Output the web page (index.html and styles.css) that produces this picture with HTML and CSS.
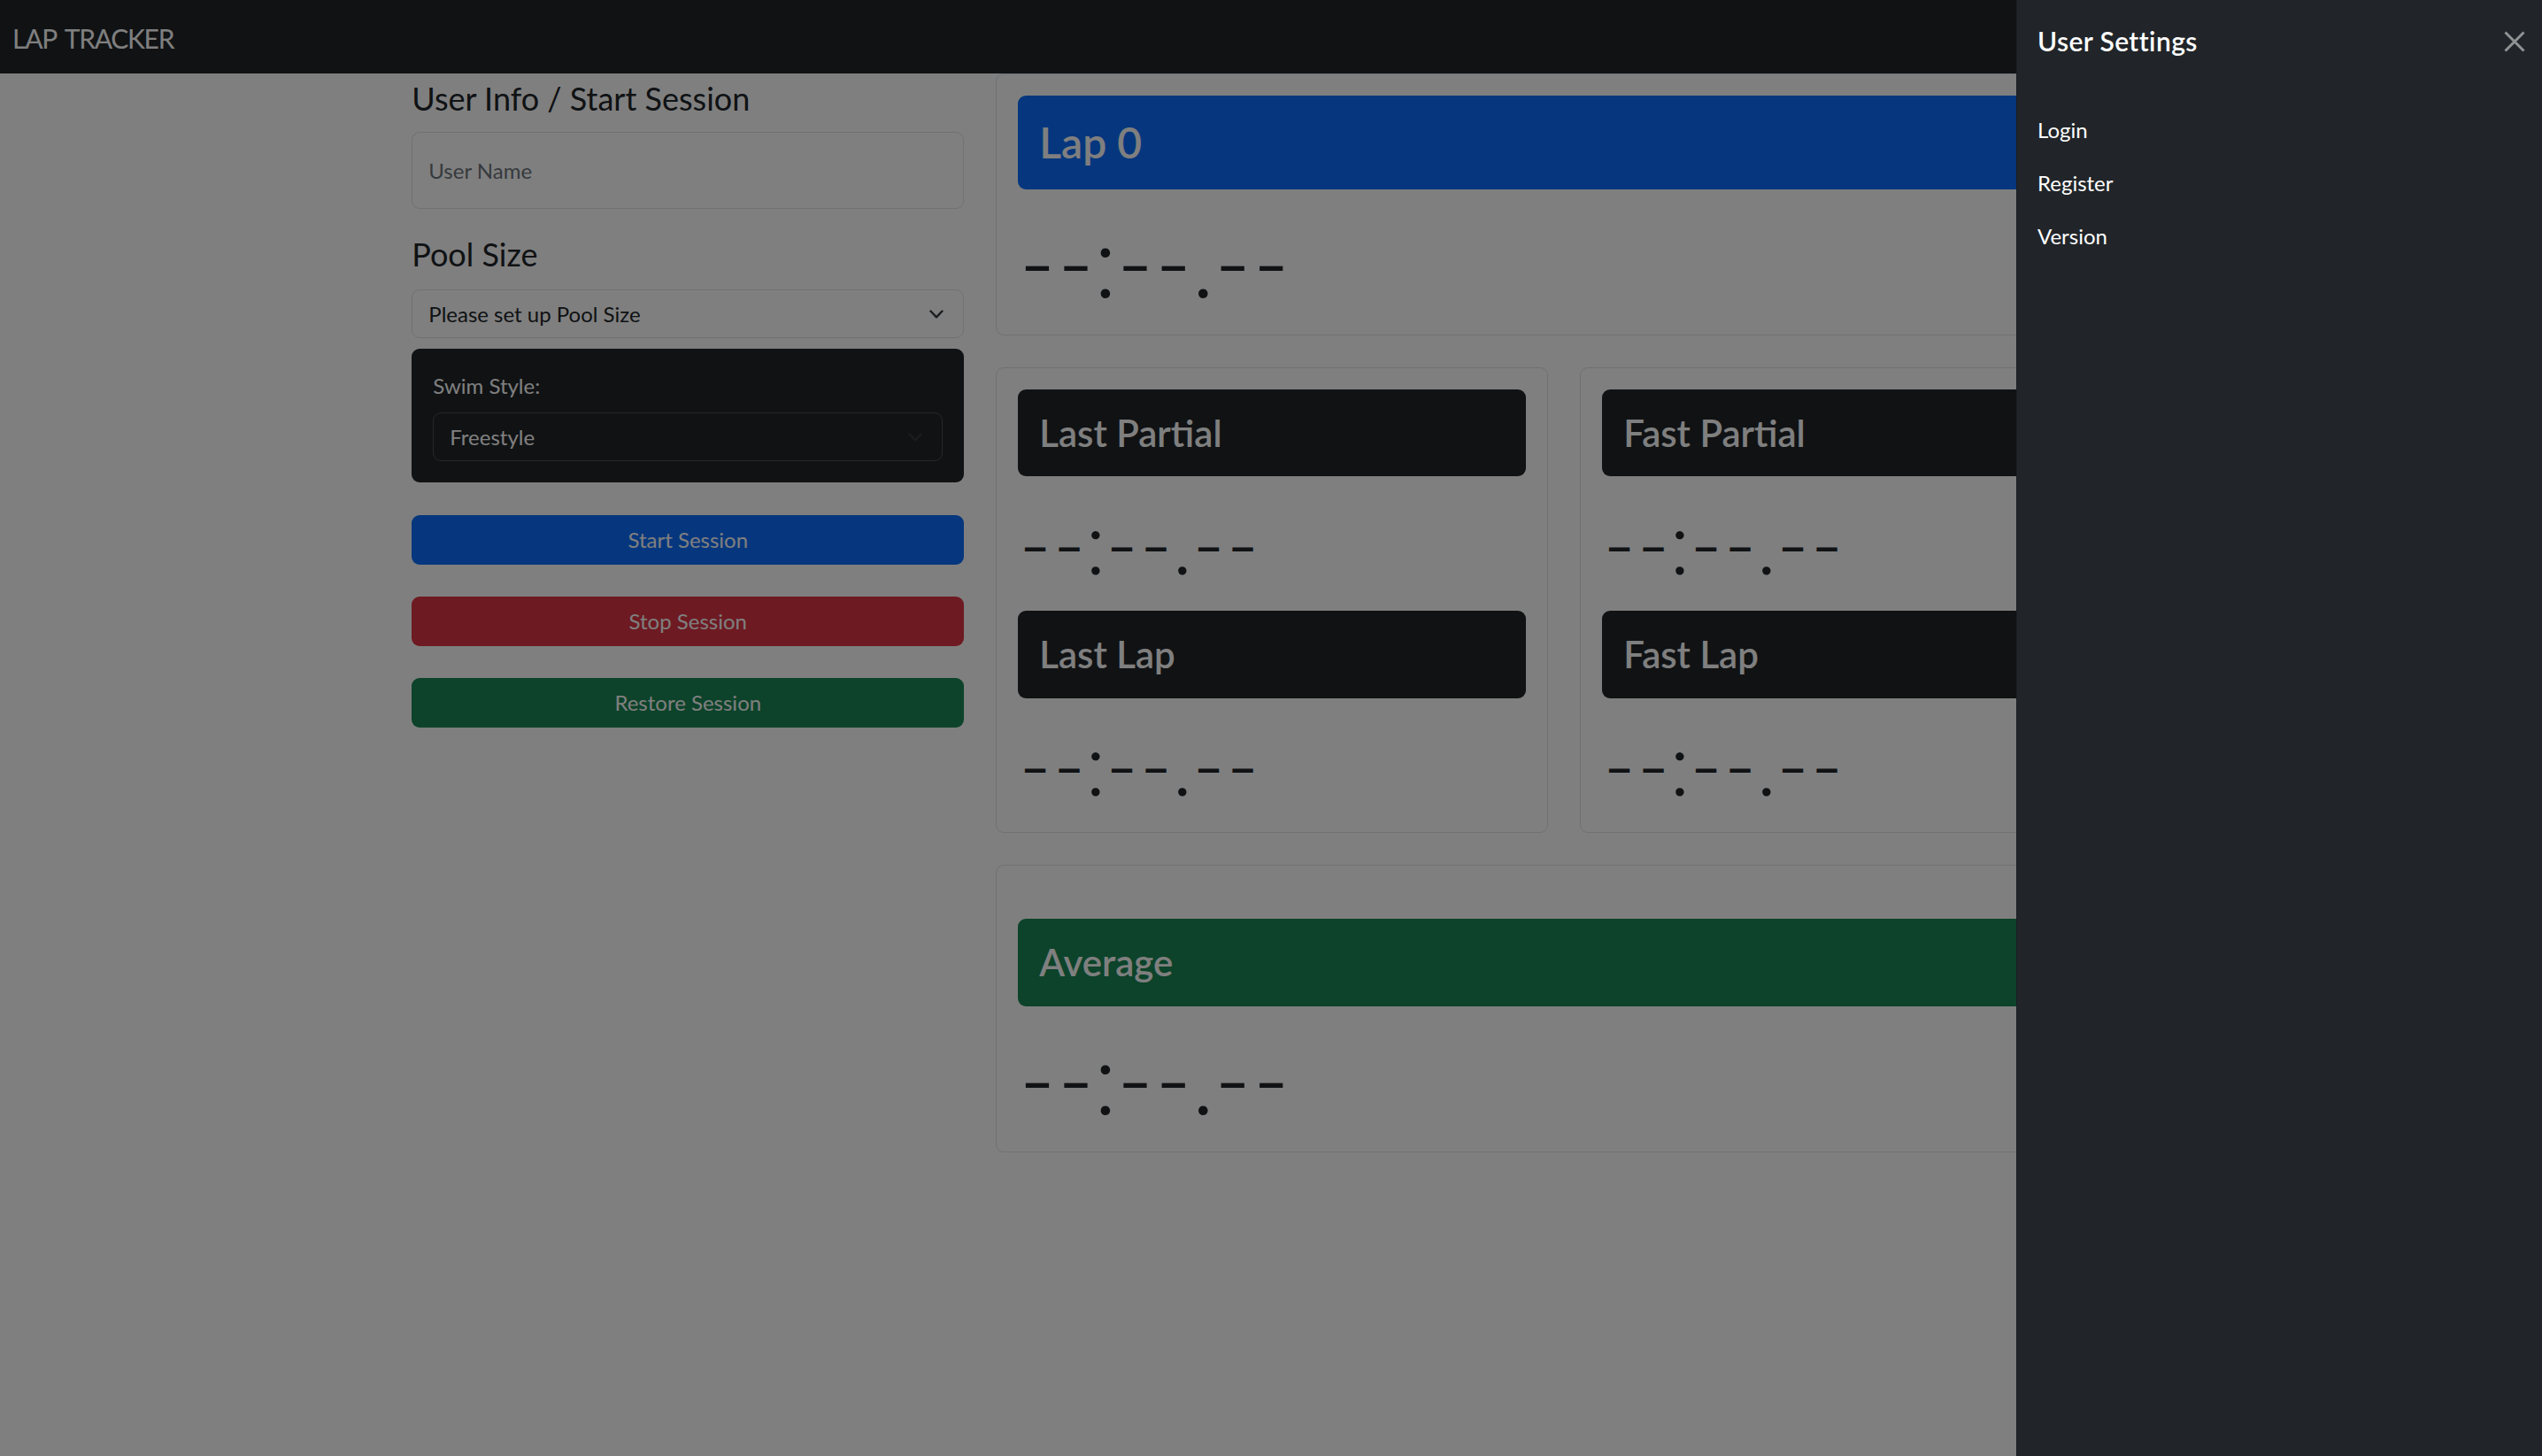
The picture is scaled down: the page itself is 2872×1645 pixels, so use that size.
FILE: index.html
```html
<!DOCTYPE html>
<html lang="en">
<head>
<meta charset="utf-8">
<title>Lap Tracker</title>
<link rel="stylesheet" href="styles.css">
</head>
<body>
<nav class="navbar"><span class="brand">LAP TRACKER</span></nav>

<main class="layout">
  <section class="side">
    <h4 class="side-title">User Info / Start Session</h4>
    <input class="field" type="text" placeholder="User Name">
    <h4 class="side-title pool-title">Pool Size</h4>
    <div class="select"><span>Please set up Pool Size</span>
      <svg class="chev" viewBox="0 0 16 10" width="16" height="10"><path d="M1.5 1.5 8 8.3 14.5 1.5" fill="none" stroke="currentColor" stroke-width="2.4" stroke-linecap="round" stroke-linejoin="round"/></svg>
    </div>
    <div class="style-box">
      <div class="style-label">Swim Style:</div>
      <div class="select select-dark"><span>Freestyle</span>
        <svg class="chev" viewBox="0 0 16 10" width="16" height="10"><path d="M1.5 1.5 8 8.3 14.5 1.5" fill="none" stroke="currentColor" stroke-width="2.4" stroke-linecap="round" stroke-linejoin="round"/></svg>
      </div>
    </div>
    <button class="btn btn-primary btn-first">Start Session</button>
    <button class="btn btn-danger">Stop Session</button>
    <button class="btn btn-success">Restore Session</button>
  </section>

  <section class="board">
    <div class="card">
      <div class="tile tile-primary"><h2 class="tile-title-lg">Lap 0</h2></div>
      <div class="clock clock-lg"><span class="d">–</span><span class="d">–</span><span class="s">:</span><span class="d">–</span><span class="d">–</span><span class="s">.</span><span class="d">–</span><span class="d">–</span></div>
    </div>

    <div class="pair">
      <div class="card">
        <div class="tile tile-dark"><h3 class="tile-title">Last Partial</h3></div>
        <div class="clock clock-sm spaced"><span class="d">–</span><span class="d">–</span><span class="s">:</span><span class="d">–</span><span class="d">–</span><span class="s">.</span><span class="d">–</span><span class="d">–</span></div>
        <div class="tile tile-dark"><h3 class="tile-title">Last Lap</h3></div>
        <div class="clock clock-sm"><span class="d">–</span><span class="d">–</span><span class="s">:</span><span class="d">–</span><span class="d">–</span><span class="s">.</span><span class="d">–</span><span class="d">–</span></div>
      </div>
      <div class="card">
        <div class="tile tile-dark"><h3 class="tile-title">Fast Partial</h3></div>
        <div class="clock clock-sm spaced"><span class="d">–</span><span class="d">–</span><span class="s">:</span><span class="d">–</span><span class="d">–</span><span class="s">.</span><span class="d">–</span><span class="d">–</span></div>
        <div class="tile tile-dark"><h3 class="tile-title">Fast Lap</h3></div>
        <div class="clock clock-sm"><span class="d">–</span><span class="d">–</span><span class="s">:</span><span class="d">–</span><span class="d">–</span><span class="s">.</span><span class="d">–</span><span class="d">–</span></div>
      </div>
    </div>

    <div class="card">
      <div class="tile tile-success tile-avg"><h3 class="tile-title">Average</h3></div>
      <div class="clock clock-lg"><span class="d">–</span><span class="d">–</span><span class="s">:</span><span class="d">–</span><span class="d">–</span><span class="s">.</span><span class="d">–</span><span class="d">–</span></div>
    </div>
  </section>
</main>

<div class="backdrop"></div>

<aside class="offcanvas">
  <div class="oc-header">
    <h5 class="oc-title">User Settings</h5>
    <button class="oc-close" aria-label="Close">
      <svg viewBox="0 0 24 24" width="24" height="24"><path d="M1.5 1.5 22.5 22.5 M22.5 1.5 1.5 22.5" fill="none" stroke="currentColor" stroke-width="3"/></svg>
    </button>
  </div>
  <ul class="oc-nav">
    <li>Login</li>
    <li>Register</li>
    <li>Version</li>
  </ul>
</aside>
</body>
</html>
```

FILE: styles.css
```css
* { box-sizing: border-box; }

html, body {
  margin: 0;
  height: 100%;
}

body {
  font-family: Lato, "Noto Sans", sans-serif;
  color: #212529;
  background: #fff;
  font-size: 24px;
  line-height: 36px;
}

/* ---------- navbar ---------- */
.navbar {
  height: 83px;
  background: #212529;
  display: flex;
  align-items: center;
  padding: 3px 0 0 14px;
}
.brand {
  color: #fff;
  font-size: 30px;
  line-height: 45px;
  letter-spacing: -1.25px;
  word-spacing: 4px;
}

/* ---------- layout ---------- */
.layout {
  width: 1944px;
  margin-left: calc(50% - 970.7px);
  display: grid;
  grid-template-columns: 624px 1284px;
  column-gap: 36px;
  align-items: start;
}

/* ---------- left column ---------- */
.side {
  display: flex;
  flex-direction: column;
  padding-top: 6.5px;
}
.side-title {
  margin: 0 0 16.6px;
  font-size: 36px;
  line-height: 43.2px;
  font-weight: 400;
}
.pool-title {
  margin-top: 30px;
  margin-bottom: 18.3px;
}
.field {
  height: 86.4px;
  border: 1px solid #dee2e6;
  border-radius: 9px;
  padding: 0 18px;
  font-family: inherit;
  font-size: 24px;
  color: #212529;
  background: #fff;
  outline: none;
}
.field::placeholder { color: #6c757d; }

.select {
  height: 55px;
  border: 1px solid #dee2e6;
  border-radius: 9px;
  padding: 0 22px 0 18px;
  display: flex;
  align-items: center;
  justify-content: space-between;
  background: #fff;
}
.chev { color: #343a40; flex: none; }

.style-box {
  margin-top: 12.3px;
  background: #212529;
  border-radius: 9px;
  padding: 24px;
}
.style-label {
  color: #fff;
  margin-bottom: 12px;
}
.select-dark {
  background: #212529;
  border-color: #495057;
  color: #fff;
}

.btn {
  height: 56px;
  margin-top: 36px;
  border: none;
  border-radius: 9px;
  font-family: inherit;
  font-size: 24px;
  line-height: 36px;
  color: #fff;
  padding: 0;
}
.btn-first { margin-top: 37px; }
.btn-primary { background: #0d6efd; }
.btn-danger { background: #dc3545; }
.btn-success { background: #198754; }

/* ---------- right board ---------- */
.board {
  display: flex;
  flex-direction: column;
  gap: 36px;
}
.pair {
  display: grid;
  grid-template-columns: 1fr 1fr;
  column-gap: 36px;
}
.card {
  border: 1px solid #dee2e6;
  border-radius: 9px;
  padding: 24px;
  background: #fff;
}
.tile {
  border-radius: 9px;
  padding: 24px;
  color: #fff;
}
.tile-primary { background: #0d6efd; }
.tile-dark { background: #212529; }
.tile-success { background: #198754; }
.tile-avg { margin-top: 36.3px; }

.tile-title-lg {
  margin: 0;
  font-size: 48px;
  line-height: 58px;
  font-weight: 600;
}
.tile-title {
  margin: 0;
  font-size: 42px;
  line-height: 50.4px;
  font-weight: 600;
}

/* ---------- seven segment style clock ---------- */
.clock {
  font-size: 0;
  line-height: 0;
  white-space: nowrap;
  color: #212529;
}
.clock .d {
  display: inline-flex;
  justify-content: center;
  font-family: "Liberation Sans", Arial, sans-serif;
  font-weight: 700;
}
.clock .s {
  display: inline-flex;
  justify-content: center;
  font-family: Lato, sans-serif;
  font-weight: 300;
}
.clock-lg {
  height: 140px;
  padding-top: 78.3px;
}
.clock-lg .d { width: 43.4px; font-size: 53px; vertical-align: 18.3px; }
.clock-lg .s { width: 23.6px; font-size: 114px; }

.clock-sm {
  height: 127px;
  padding-top: 71.5px;
}
.clock-sm.spaced { margin-bottom: 25px; }
.clock-sm .d { width: 38.5px; font-size: 47px; vertical-align: 16.3px; }
.clock-sm .s { width: 21px; font-size: 101px; }

/* ---------- backdrop & offcanvas ---------- */
.backdrop {
  position: fixed;
  inset: 0;
  background: rgba(0, 0, 0, 0.5);
}
.offcanvas {
  position: fixed;
  top: 0;
  right: 0;
  bottom: 0;
  width: 594px;
  background: #212529;
  color: #fff;
  border-left: 1px solid rgba(0, 0, 0, 0.175);
}
.oc-header {
  display: flex;
  align-items: center;
  justify-content: space-between;
  padding: 24px 19px 22px 23px;
}
.oc-title {
  margin: 0;
  font-size: 30px;
  line-height: 45px;
  font-weight: 600;
  letter-spacing: 0.4px;
}
.oc-close {
  width: 24px;
  height: 24px;
  margin-top: 1px;
  padding: 0;
  border: none;
  background: none;
  color: rgba(255, 255, 255, 0.5);
  display: flex;
}
.oc-nav {
  list-style: none;
  margin: 0;
  padding: 25.5px 23px;
}
.oc-nav li {
  padding: 12px 0;
  line-height: 36px;
}
```
